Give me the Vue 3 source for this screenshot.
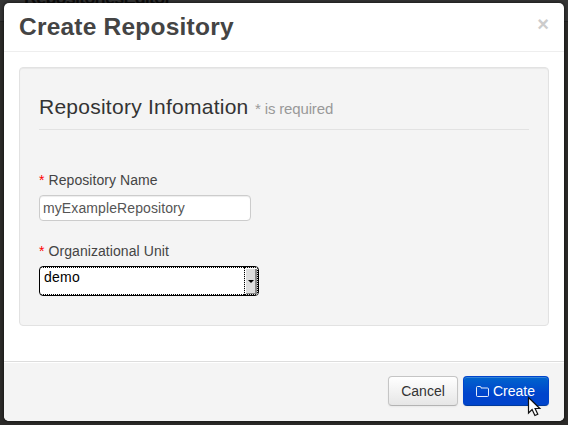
<script setup>
import { ref } from 'vue'

const name = ref('myExampleRepository')
const unit = ref('demo')
</script>

<template>
  <div class="screen">
    <div class="behind">RepositoriesEditor</div>
    <section class="modal">
      <header class="head">
        <h3>Create Repository</h3>
        <button class="close">×</button>
      </header>
      <div class="body">
        <form class="well" @submit.prevent>
          <div class="legend"><span class="legend-title">Repository Infomation</span><small>* is required</small></div>
          <label class="first"><b>*</b> Repository Name</label>
          <input v-model="name" class="field" type="text" />
          <label class="second"><b>*</b> Organizational Unit</label>
          <div class="select">
            <span class="value">{{ unit }}</span>
            <span class="arrow"><i></i></span>
          </div>
        </form>
      </div>
      <footer class="foot">
        <button class="btn">Cancel</button>
        <button class="btn primary">
          <svg width="13" height="11" viewBox="0 0 13 11"><path d="M.5 1.500Q.5.5 1.500.5h2.500Q5 .5 5 1.500v.5h6.500Q12.500 2 12.500 3v6.500Q12.500 10.500 11.500 10.500h-10Q.5 10.500.5 9.500Z" fill="none" stroke="#fff" stroke-opacity=".9" /></svg>
          <span>Create</span>
        </button>
      </footer>
    </section>
    <svg class="cursor" width="16" height="22" viewBox="0 0 16 22">
      <path d="M1.500 1.500v15.500l3.600-3.400 2.800 5.900 2.900-1.300-2.700-5.700h4.700Z" fill="#fff" stroke="#111" stroke-width="1.200" />
    </svg>
  </div>
</template>

<style>
body { margin: 0; overflow: hidden; background: #2c2b29; }
</style>

<style scoped>
* { box-sizing: border-box; }
.screen {
  position: relative;
  width: 568px;
  height: 425px;
  padding: 3px 4px 4px;
  overflow: hidden;
  background: linear-gradient(#343434 0, #343434 21px, #222 21px, #222 22px, #2c2b29 22px);
  font-family: "Liberation Sans", Arial, sans-serif;
  font-size: 14px;
  color: #444;
}
.behind {
  position: absolute;
  left: 24px;
  top: -12px;
  font-size: 18px;
  line-height: 20px;
  font-weight: 700;
  letter-spacing: -.8px;
  color: #0e0e0e;
}
.modal {
  position: relative;
  display: flex;
  flex-direction: column;
  height: 418px;
  background: #fff;
  border-radius: 5px;
  overflow: hidden;
  box-shadow: 0 0 3px 1px rgba(0, 0, 0, .45);
}
.head {
  display: flex;
  justify-content: space-between;
  height: 49px;
  padding: 9px 15px 0;
  border-bottom: 1px solid #eee;
}
h3 {
  margin: 0;
  font-size: 24.5px;
  line-height: 30px;
  font-weight: 700;
  letter-spacing: .22px;
  color: #444;
}
.close {
  border: 0;
  padding: 0;
  height: 20px;
  margin-top: 2px;
  background: none;
  font: 700 20px/20px "Liberation Sans", Arial, sans-serif;
  color: #ccc;
}
.body { height: 309px; padding: 15px 15px 0; }
.well {
  display: flex;
  flex-direction: column;
  align-items: flex-start;
  height: 259px;
  padding: 19px;
  background: #f4f4f4;
  border: 1px solid #e2e2e2;
  border-radius: 4px;
  box-shadow: inset 0 1px 1px rgba(0, 0, 0, .05);
}
.legend {
  display: flex;
  align-items: baseline;
  width: 100%;
  height: 43px;
  border-bottom: 1px solid #e2e2e2;
  line-height: 40px;
  color: #333;
}
.legend-title { width: 216px; font-size: 21px; white-space: nowrap; letter-spacing: .25px; }
small { font-size: 15px; letter-spacing: -.15px; color: #999; white-space: nowrap; }
label { line-height: 20px; letter-spacing: .07px; }
label b { color: #f00; font-weight: 400; }
.first { margin-top: 40px; }
.field {
  width: 212px;
  height: 26px;
  margin: 5px 0 0;
  padding: 0 3px;
  border: 1px solid #ccc;
  border-radius: 4px;
  outline: 0;
  background: #fff;
  box-shadow: inset 0 1px 1px rgba(0, 0, 0, .075);
  font: 14px "Liberation Sans", Arial, sans-serif;
  letter-spacing: .1px;
  color: #555;
}
.second { margin-top: 20px; }
.select {
  display: flex;
  width: 220px;
  height: 30px;
  margin-top: 5px;
  border: 1px solid #000;
  border-radius: 4px;
  overflow: hidden;
  background: #fff;
  color: #000;
}
.value {
  flex: 1;
  padding-left: 4px;
  border-top: 1px dotted #000;
  border-bottom: 1px dotted #000;
  line-height: 18px;
  letter-spacing: .25px;
}
.arrow {
  display: flex;
  align-items: center;
  justify-content: center;
  width: 14px;
  border: 1px dotted #000;
  background: #ddd;
  box-shadow: inset 1px 1px 0 #fff, inset -2px -1px 0 #888;
}
.arrow i {
  width: 0;
  height: 0;
  border: 3px solid transparent;
  border-top-color: #000;
  border-bottom: 0;
}
.foot {
  display: flex;
  justify-content: flex-end;
  gap: 5px;
  height: 60px;
  padding: 14px 15px 0;
  border-top: 1px solid #ddd;
  background: #f4f4f4;
  box-shadow: inset 0 1px 0 #fff;
}
.btn {
  display: flex;
  align-items: center;
  justify-content: center;
  width: 70px;
  height: 30px;
  padding: 0;
  border: 1px solid #c5c5c5;
  border-bottom-color: #b3b3b3;
  border-radius: 4px;
  background: linear-gradient(#fff, #e6e6e6);
  box-shadow: inset 0 1px 0 rgba(255, 255, 255, .2), 0 1px 2px rgba(0, 0, 0, .05);
  font: 14px/20px "Liberation Sans", Arial, sans-serif;
  color: #333;
}
.primary {
  justify-content: flex-start;
  gap: 4px;
  width: 86px;
  padding-left: 12px;
  border-color: #04c #04c #003a9c;
  background: linear-gradient(#0064cd, #04c 60%);
  color: #fff;
}
.cursor { position: absolute; left: 527px; top: 396px; }
</style>
